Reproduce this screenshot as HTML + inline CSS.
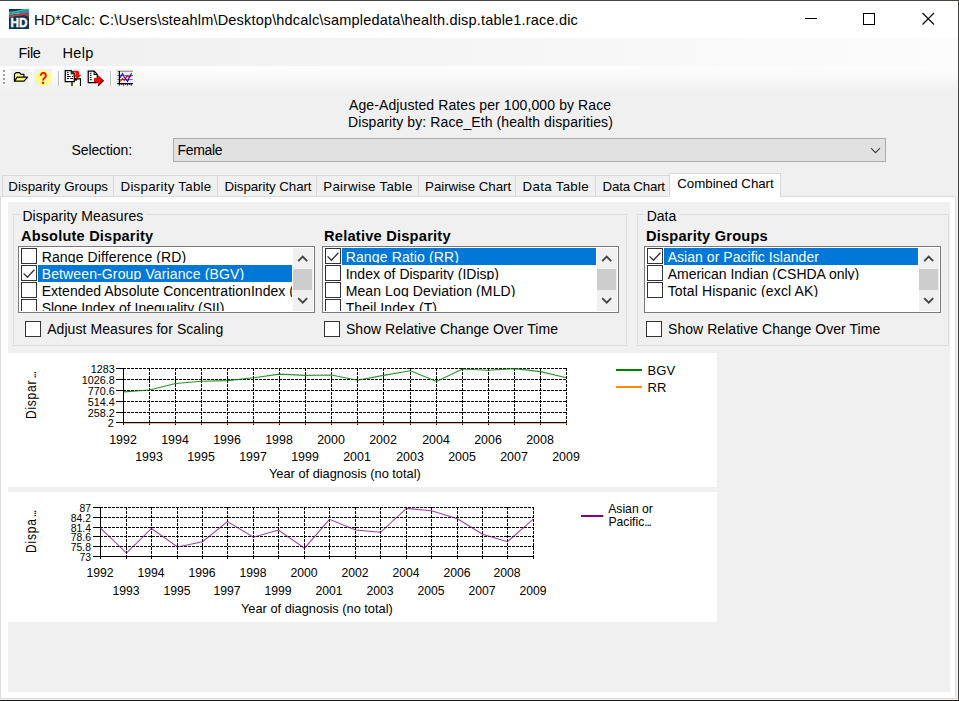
<!DOCTYPE html>
<html lang="en"><head><meta charset="utf-8"><title>HD*Calc</title>
<style>
html,body{margin:0;padding:0}
body{width:959px;height:701px;overflow:hidden;position:relative;background:#f0f0f0;font-family:"Liberation Sans",Arial,sans-serif;color:#000}
div,span,svg{position:absolute;box-sizing:border-box}
span{white-space:nowrap}
.b{font-weight:bold}
.cb{width:16px;height:16px;border:1px solid #333;background:#fff}
.lb{border:1px solid #7a7a7a;background:#fff;overflow:hidden}
.row{left:0;height:17px}
.sel{background:#0078d7}
.it{overflow:hidden;height:14.6px}
.it span{position:absolute;left:0;color:inherit}
.sb{background:#f0f0f0}
.th{background:#cdcdcd}
.gb{border:1px solid #dcdcdc}
.tab{top:175px;height:21px;border:1px solid #d9d9d9;border-bottom:none;background:#f0f0f0}
</style></head><body>
<div style="left:0;top:0;width:959px;height:38px;background:#fff"></div>
<div style="left:0;top:38px;width:958px;height:28px;background:linear-gradient(90deg,#f0f0f0,#f3f3f3 30%,#fcfcfc)"></div>
<div style="left:0;top:66px;width:958px;height:24px;background:linear-gradient(#fdfdfd,#f9f9f9 45%,#f1f1f1);border-radius:0 0 0 3px"></div>
<svg style="left:9px;top:9px" width="20" height="20" viewBox="0 0 20 20">
<rect width="20" height="20" fill="#0d3350"/>
<path d="M0 2.8 C6 2.2 11 0.8 15 0 L20 0 L20 0.9 C14 1.8 7 3.6 0 5Z" fill="#1fc79c"/>
<path d="M0 4.8 C7 3.4 14 1.6 20 0.8 L20 4.8 C17 4.2 15.5 3.9 14 4.2 C9 4.6 4 5.6 0 6.6Z" fill="#3f88bb"/>
<path d="M3 5 C7 4.2 9 3.9 11.5 3.8 L10.5 4.6 C7 4.8 5 5.2 3 5.7Z" fill="#6ab8ee"/>
<path d="M0 6.6 C4 5.6 9 4.6 14 4.2 L15 3.8 L20 5.4 L20 8 L15 6 L13.5 6.4 C9 6.6 4 7.4 0 8.8Z" fill="#c4452c"/>
<text x="10" y="18.4" text-anchor="middle" font-family="Liberation Sans, sans-serif" font-weight="bold" font-size="12.7" fill="#f4f6f8" stroke="#f4f6f8" stroke-width="0.45" textLength="17" lengthAdjust="spacingAndGlyphs">HD</text>
</svg>
<span style="left:34px;top:11.8px;font-size:14.5px;line-height:16px;letter-spacing:0.184px">HD*Calc: C:\Users\steahlm\Desktop\hdcalc\sampledata\health.disp.table1.race.dic</span>
<svg style="left:800px;top:6px" width="150" height="26" viewBox="800 6 150 26" fill="none" stroke="#000" stroke-width="1">
<path d="M805 18.5H817"/><rect x="863.5" y="13.5" width="11" height="11"/><path d="M922.5 13 L934 24.5 M934 13 L922.5 24.5" stroke-width="1.1"/>
</svg>
<span style="left:18.5px;top:44.5px;font-size:14.5px;line-height:16px;letter-spacing:-0.34px">File</span>
<span style="left:62.5px;top:44.5px;font-size:14.5px;line-height:16px;letter-spacing:0.3px">Help</span>
<div style="left:4px;top:71px;width:2px;height:2px;background:#fff"></div><div style="left:3px;top:70px;width:2px;height:2px;background:#a0a0a0"></div><div style="left:4px;top:75px;width:2px;height:2px;background:#fff"></div><div style="left:3px;top:74px;width:2px;height:2px;background:#a0a0a0"></div><div style="left:4px;top:79px;width:2px;height:2px;background:#fff"></div><div style="left:3px;top:78px;width:2px;height:2px;background:#a0a0a0"></div><div style="left:4px;top:83px;width:2px;height:2px;background:#fff"></div><div style="left:3px;top:82px;width:2px;height:2px;background:#a0a0a0"></div>
<div style="left:11px;top:69px;width:18px;height:18px;background:#f0f0f0"></div><div style="left:34px;top:69px;width:18px;height:18px;background:#f0f0f0"></div><div style="left:63px;top:69px;width:18px;height:18px;background:#f0f0f0"></div><div style="left:86px;top:69px;width:18px;height:18px;background:#f0f0f0"></div><div style="left:115px;top:69px;width:18px;height:18px;background:#f0f0f0"></div>
<div style="left:58px;top:71px;width:1px;height:15px;background:#bdbdbd"></div><div style="left:59px;top:71px;width:1px;height:15px;background:#fff"></div><div style="left:110px;top:71px;width:1px;height:15px;background:#bdbdbd"></div><div style="left:111px;top:71px;width:1px;height:15px;background:#fff"></div>
<svg width="0" height="0" style="left:0;top:0"><defs><pattern id="dy" width="2" height="2" patternUnits="userSpaceOnUse"><rect width="2" height="2" fill="#fff"/><rect width="1" height="1" fill="#ff0"/><rect x="1" y="1" width="1" height="1" fill="#ff0"/></pattern></defs></svg>
<svg style="left:11px;top:69px" width="18" height="18" viewBox="0 0 16 16"><path d="M3.1 10.8 V4.6 L4.5 3.2 H7.6 L8.9 4.7 H11.5 V7.3" fill="url(#dy)" stroke="#000" stroke-width="1.1" stroke-linejoin="round"/><path d="M3.1 10.8 L5.6 7.3 H14.7 L11.6 10.8 Z" fill="url(#dy)" stroke="#000" stroke-width="1.1" stroke-linejoin="round"/></svg>
<svg style="left:34px;top:69px" width="18" height="18" viewBox="0 0 16 16"><circle cx="8.5" cy="7.7" r="6.9" fill="url(#dy)"/><text transform="translate(8.4 13.7) scale(0.8 1)" text-anchor="middle" font-family="Liberation Sans, sans-serif" font-weight="bold" font-size="15" fill="#f00">?</text></svg>
<svg style="left:63px;top:69px" width="18" height="18" viewBox="0 0 16 16"><path d="M8 15 V8.8 H15.6 V15" fill="#ff0" stroke="#000" stroke-width="1.1"/><rect x="9.1" y="9.7" width="5.5" height="5.3" fill="#fff"/><rect x="10.4" y="8.3" width="2.2" height="2" fill="#000"/>
<path d="M2 1.4 H7.3 L10 4.3 V11.2 H2 Z" fill="#fff" stroke="#000" stroke-width="1.1"/><path d="M7.3 1.4 V4.3 H10" fill="none" stroke="#000" stroke-width="0.9"/>
<path d="M3.7 3.2H4.8M3.6 4.8H5.4M3.6 6.6H6.8M8 6.6H8.9M3.6 8.5H5.4M6.4 8.5H8.9" stroke="#000" stroke-width="0.9"/>
<path d="M8.9 1.5 H13 Q14.3 1.5 14.3 3 V5.3 H16.2 L12.7 8.6 L9.3 5.3 H11.2 V3.2 H8.9 Z" fill="#f00"/></svg>
<svg style="left:86px;top:69px" width="18" height="18" viewBox="0 0 16 16"><path d="M2 1.9 H7.2 L10 4.8 V12.2 H2 Z" fill="#fff" stroke="#000" stroke-width="1.1"/><path d="M7.2 1.9 V4.8 H10" fill="none" stroke="#000" stroke-width="0.9"/>
<path d="M3.5 3.8H4.9M3.5 5.7H4.9M3.5 7.5H4.9M3.5 9.4H4.9" stroke="#000" stroke-width="1"/>
<path d="M7.2 8 H10.8 V5.8 L15.5 10.2 L10.8 14.8 V11.6 H7.2 Z" fill="#f00"/><path d="M15.6 10.2 L10.9 15" stroke="#000" stroke-width="0.9" fill="none"/><path d="M10.9 6 L15.6 10.2" stroke="#000" stroke-width="0.5" fill="none"/></svg>
<svg style="left:115px;top:69px" width="18" height="18" viewBox="0 0 16 16"><path d="M2 2.1H16M2 5.7H16M2 9.3H16" stroke="#808080" stroke-width="0.9"/><path d="M3.9 1.7V13.2M2 12.9H16" stroke="#000" stroke-width="1.1" fill="none"/>
<path d="M3.9 13.4V14.8M7.5 13.4V14.8M11 13.4V14.8M14.5 13.4V14.8M5.7 13.4V14.2M9.2 13.4V14.2M12.8 13.4V14.2" stroke="#000" stroke-width="0.8"/>
<polyline points="4.7,11 6.6,8.5 8.2,10.1 10.8,5.9 12.6,7.3 14.9,5.7" fill="none" stroke="#f00" stroke-width="0.95"/>
<polyline points="4.5,7.8 6.6,4 8.4,7.3 11.2,11 12.8,7.3 14.7,3.8" fill="none" stroke="#00f" stroke-width="0.95"/></svg>
<span style="left:349px;top:97px;font-size:14px;line-height:16px;letter-spacing:0.1px">Age-Adjusted Rates per 100,000 by Race</span>
<span style="left:348px;top:114px;font-size:14px;line-height:16px;letter-spacing:0.1px">Disparity by: Race_Eth (health disparities)</span>
<span style="left:71.5px;top:141.6px;font-size:14px;line-height:16px;letter-spacing:-0.1px">Selection:</span>
<div style="left:173px;top:138px;width:713px;height:24px;background:#e1e1e1;border:1px solid #adadad"></div>
<span style="left:177.4px;top:141.6px;font-size:14px;line-height:16px;letter-spacing:-0.29px">Female</span>
<svg style="left:868px;top:145px" width="16" height="11" viewBox="868 145 16 11" fill="none" stroke="#404040" stroke-width="1.2"><path d="M871 148.1 L875.5 152.6 L880 148.1"/></svg>
<div style="left:0;top:196px;width:956px;height:503px;background:#fff;border:1px solid #dcdcdc"></div>
<div style="left:8px;top:202px;width:942px;height:490px;background:#f0f0f0"></div>
<div class="tab" style="left:2px;width:112px"></div>
<span style="left:8.3px;top:179px;font-size:13.33px;line-height:15px;letter-spacing:0.03px">Disparity Groups</span>
<div class="tab" style="left:113px;width:105px"></div>
<span style="left:120.5px;top:179px;font-size:13.33px;line-height:15px;letter-spacing:0.25px">Disparity Table</span>
<div class="tab" style="left:217px;width:100px"></div>
<span style="left:224.4px;top:179px;font-size:13.33px;line-height:15px;letter-spacing:-0.07px">Disparity Chart</span>
<div class="tab" style="left:316px;width:103px"></div>
<span style="left:323.3px;top:179px;font-size:13.33px;line-height:15px;letter-spacing:0.26px">Pairwise Table</span>
<div class="tab" style="left:418px;width:98px"></div>
<span style="left:425.1px;top:179px;font-size:13.33px;line-height:15px;letter-spacing:-0.05px">Pairwise Chart</span>
<div class="tab" style="left:515px;width:81px"></div>
<span style="left:522.5px;top:179px;font-size:13.33px;line-height:15px;letter-spacing:0.31px">Data Table</span>
<div class="tab" style="left:595px;width:76px"></div>
<span style="left:602.6px;top:179px;font-size:13.33px;line-height:15px;letter-spacing:-0.22px">Data Chart</span>
<div style="left:669px;top:173px;width:112px;height:24px;border:1px solid #d9d9d9;border-bottom:none;background:#fff"></div><div style="left:670px;top:196px;width:110px;height:2px;background:#fff"></div>
<span style="left:677.3px;top:176.4px;font-size:13.33px;line-height:15px;letter-spacing:-0.05px">Combined Chart</span>
<div class="gb" style="left:13px;top:214px;width:614px;height:132px"></div>
<div style="left:20px;top:208px;width:126px;height:14px;background:#f0f0f0"></div>
<span style="left:22.4px;top:208px;font-size:14px;line-height:16px;letter-spacing:0.06px">Disparity Measures</span>
<div class="gb" style="left:637px;top:214px;width:312px;height:132px"></div>
<div style="left:644px;top:208px;width:35px;height:14px;background:#f0f0f0"></div>
<span style="left:646.7px;top:208px;font-size:14px;line-height:16px;">Data</span>
<span class="b" style="left:21.1px;top:228.4px;font-size:14px;line-height:16px;letter-spacing:0.2px;transform:scaleX(1.039);transform-origin:0 0">Absolute Disparity</span>
<span class="b" style="left:323.5px;top:228.4px;font-size:14px;line-height:16px;letter-spacing:0.2px;transform:scaleX(1.047);transform-origin:0 0">Relative Disparity</span>
<span class="b" style="left:645.5px;top:228.4px;font-size:14px;line-height:16px;letter-spacing:0.2px;transform:scaleX(1.044);transform-origin:0 0">Disparity Groups</span>
<div class="lb" style="left:18px;top:246px;width:297px;height:67px">
<div class="cb" style="left:2px;top:1px"></div><div class="row" style="left:19px;top:1px;width:254px;color:#000"><div class="it" style="left:0;top:0;width:100%"><span style="left:3.7px;top:0.5px;font-size:14px;line-height:16px;letter-spacing:0.12px">Range Difference (RD)</span></div></div>
<div class="cb" style="left:2px;top:18px"><svg style="left:-1px;top:-1px" width="16" height="16" viewBox="0 0 16 16" fill="none" stroke="#333" stroke-width="1.3"><path d="M2.6 8.4 L6.4 12.2 L13.4 4.8"/></svg></div><div class="row sel" style="left:19px;top:18px;width:254px;color:#fff"><div class="it" style="left:0;top:0;width:100%"><span style="left:3.7px;top:0.5px;font-size:14px;line-height:16px;letter-spacing:0.127px">Between-Group Variance (BGV)</span></div></div>
<div class="cb" style="left:2px;top:35px"></div><div class="row" style="left:19px;top:35px;width:254px;color:#000"><div class="it" style="left:0;top:0;width:100%"><span style="left:3.7px;top:0.5px;font-size:14px;line-height:16px;letter-spacing:0.045px">Extended Absolute ConcentrationIndex (ACI)</span></div></div>
<div class="cb" style="left:2px;top:52px"></div><div class="row" style="left:19px;top:52px;width:254px;color:#000"><div class="it" style="left:0;top:0;width:100%"><span style="left:3.7px;top:0.5px;font-size:14px;line-height:16px;letter-spacing:-0.034px">Slope Index of Inequality (SII)</span></div></div>
<div style="left:0;top:64px;width:274px;height:1px;background:#fff"></div><div class="sb" style="left:274px;top:1px;width:20px;height:63px"></div><div class="th" style="left:274px;top:22px;width:19px;height:21px"></div><svg style="left:274px;top:1px" width="20" height="63" viewBox="0 0 20 63" fill="none" stroke="#444" stroke-width="1.9"><path d="M5.2 13.2 L9.7 8.7 L14.2 13.2"/><path d="M5.2 50.2 L9.7 54.7 L14.2 50.2"/></svg></div>
<div class="lb" style="left:322px;top:246px;width:297px;height:67px">
<div class="cb" style="left:2px;top:1px"><svg style="left:-1px;top:-1px" width="16" height="16" viewBox="0 0 16 16" fill="none" stroke="#333" stroke-width="1.3"><path d="M2.6 8.4 L6.4 12.2 L13.4 4.8"/></svg></div><div class="row sel" style="left:19px;top:1px;width:254px;color:#fff"><div class="it" style="left:0;top:0;width:100%"><span style="left:3.7px;top:0.5px;font-size:14px;line-height:16px;letter-spacing:0.138px">Range Ratio (RR)</span></div></div>
<div class="cb" style="left:2px;top:18px"></div><div class="row" style="left:19px;top:18px;width:254px;color:#000"><div class="it" style="left:0;top:0;width:100%"><span style="left:3.7px;top:0.5px;font-size:14px;line-height:16px;letter-spacing:0px">Index of Disparity (IDisp)</span></div></div>
<div class="cb" style="left:2px;top:35px"></div><div class="row" style="left:19px;top:35px;width:254px;color:#000"><div class="it" style="left:0;top:0;width:100%"><span style="left:3.7px;top:0.5px;font-size:14px;line-height:16px;letter-spacing:0.105px">Mean Log Deviation (MLD)</span></div></div>
<div class="cb" style="left:2px;top:52px"></div><div class="row" style="left:19px;top:52px;width:254px;color:#000"><div class="it" style="left:0;top:0;width:100%"><span style="left:3.7px;top:0.5px;font-size:14px;line-height:16px;letter-spacing:0.074px">Theil Index (T)</span></div></div>
<div style="left:0;top:64px;width:274px;height:1px;background:#fff"></div><div class="sb" style="left:274px;top:1px;width:20px;height:63px"></div><div class="th" style="left:274px;top:22px;width:19px;height:21px"></div><svg style="left:274px;top:1px" width="20" height="63" viewBox="0 0 20 63" fill="none" stroke="#444" stroke-width="1.9"><path d="M5.2 13.2 L9.7 8.7 L14.2 13.2"/><path d="M5.2 50.2 L9.7 54.7 L14.2 50.2"/></svg></div>
<div class="lb" style="left:644px;top:246px;width:297px;height:67px">
<div class="cb" style="left:2px;top:1px"><svg style="left:-1px;top:-1px" width="16" height="16" viewBox="0 0 16 16" fill="none" stroke="#333" stroke-width="1.3"><path d="M2.6 8.4 L6.4 12.2 L13.4 4.8"/></svg></div><div class="row sel" style="left:19px;top:1px;width:254px;color:#fff"><div class="it" style="left:0;top:0;width:100%"><span style="left:3.7px;top:0.5px;font-size:14px;line-height:16px;letter-spacing:0.043px">Asian or Pacific Islander</span></div></div>
<div class="cb" style="left:2px;top:18px"></div><div class="row" style="left:19px;top:18px;width:254px;color:#000"><div class="it" style="left:0;top:0;width:100%"><span style="left:3.7px;top:0.5px;font-size:14px;line-height:16px;letter-spacing:-0.025px">American Indian (CSHDA only)</span></div></div>
<div class="cb" style="left:2px;top:35px"></div><div class="row" style="left:19px;top:35px;width:254px;color:#000"><div class="it" style="left:0;top:0;width:100%"><span style="left:3.7px;top:0.5px;font-size:14px;line-height:16px;letter-spacing:0.15px">Total Hispanic (excl AK)</span></div></div>
<div style="left:0;top:64px;width:274px;height:1px;background:#fff"></div><div class="sb" style="left:274px;top:1px;width:20px;height:63px"></div><div class="th" style="left:274px;top:22px;width:19px;height:21px"></div><svg style="left:274px;top:1px" width="20" height="63" viewBox="0 0 20 63" fill="none" stroke="#444" stroke-width="1.9"><path d="M5.2 13.2 L9.7 8.7 L14.2 13.2"/><path d="M5.2 50.2 L9.7 54.7 L14.2 50.2"/></svg></div>
<div class="cb" style="left:25px;top:321px"></div>
<span style="left:47.2px;top:320.7px;font-size:14px;line-height:16px;letter-spacing:0.066px">Adjust Measures for Scaling</span>
<div class="cb" style="left:324px;top:321px"></div>
<span style="left:346px;top:320.7px;font-size:14px;line-height:16px;letter-spacing:0.036px">Show Relative Change Over Time</span>
<div class="cb" style="left:646px;top:321px"></div>
<span style="left:668px;top:320.7px;font-size:14px;line-height:16px;letter-spacing:0.047px">Show Relative Change Over Time</span>
<svg style="left:8px;top:353px" width="709" height="134" viewBox="8 353 709 134" font-family="Liberation Sans, Arial, sans-serif" fill="#000">
<rect x="8" y="353" width="709" height="134" fill="#fff"/>
<text transform="translate(36.3 419) rotate(-90) scale(0.9 1.1)" font-size="13.3" letter-spacing="0.86">Dispar<tspan dx="1.3" letter-spacing="-1.25">...</tspan></text>
<path d="M123 368.5H567M123 379.5H567M123 390.5H567M123 401.5H567M123 412.5H567M149.5 368V423M175.5 368V423M201.5 368V423M227.5 368V423M253.5 368V423M279.5 368V423M305.5 368V423M331.5 368V423M357.5 368V423M383.5 368V423M410.5 368V423M436.5 368V423M462.5 368V423M488.5 368V423M514.5 368V423M540.5 368V423M566.5 368V423" stroke="#000" stroke-width="1" stroke-dasharray="3 1" fill="none" shape-rendering="crispEdges"/>
<path d="M116 368.5H123M116 379.5H123M116 390.5H123M116 401.5H123M116 412.5H123M116 422.5H123M123.5 423V425M149.5 423V425M175.5 423V425M201.5 423V425M227.5 423V425M253.5 423V425M279.5 423V425M305.5 423V425M331.5 423V425M357.5 423V425M383.5 423V425M410.5 423V425M436.5 423V425M462.5 423V425M488.5 423V425M514.5 423V425M540.5 423V425M566.5 423V425" stroke="#000" stroke-width="1" fill="none" shape-rendering="crispEdges"/>
<path d="M124 423.4H567" stroke="#ff8c00" stroke-width="0.7"/>
<path d="M123.5 368V423M123 422.5H567" stroke="#000" stroke-width="1" fill="none" shape-rendering="crispEdges"/>
<polyline points="123.5,391.9 149.5,390.0 175.5,383.5 201.5,381.2 227.5,380.6 253.5,377.8 279.5,374.1 305.5,375.4 331.5,375.0 357.5,380.3 383.5,375.4 410.5,370.7 436.5,381.4 462.5,369.0 488.5,370.3 514.5,368.6 540.5,371.6 566.5,377.8" fill="none" stroke="#008000" stroke-width="1.1" stroke-opacity="0.85"/>
<text x="114.8" y="372.7" font-size="10.8" text-anchor="end">1283</text><text x="114.8" y="383.7" font-size="10.8" text-anchor="end">1026.8</text><text x="114.8" y="394.7" font-size="10.8" text-anchor="end">770.6</text><text x="114.8" y="405.7" font-size="10.8" text-anchor="end">514.4</text><text x="114.8" y="416.7" font-size="10.8" text-anchor="end">258.2</text><text x="113.8" y="426.7" font-size="10.8" text-anchor="end">2</text>
<text x="123.0" y="443.9" font-size="12.4" text-anchor="middle">1992</text><text x="149.0" y="461.3" font-size="12.4" text-anchor="middle">1993</text><text x="175.0" y="443.9" font-size="12.4" text-anchor="middle">1994</text><text x="201.0" y="461.3" font-size="12.4" text-anchor="middle">1995</text><text x="227.0" y="443.9" font-size="12.4" text-anchor="middle">1996</text><text x="253.0" y="461.3" font-size="12.4" text-anchor="middle">1997</text><text x="279.0" y="443.9" font-size="12.4" text-anchor="middle">1998</text><text x="305.0" y="461.3" font-size="12.4" text-anchor="middle">1999</text><text x="331.0" y="443.9" font-size="12.4" text-anchor="middle">2000</text><text x="357.0" y="461.3" font-size="12.4" text-anchor="middle">2001</text><text x="383.0" y="443.9" font-size="12.4" text-anchor="middle">2002</text><text x="410.0" y="461.3" font-size="12.4" text-anchor="middle">2003</text><text x="436.0" y="443.9" font-size="12.4" text-anchor="middle">2004</text><text x="462.0" y="461.3" font-size="12.4" text-anchor="middle">2005</text><text x="488.0" y="443.9" font-size="12.4" text-anchor="middle">2006</text><text x="514.0" y="461.3" font-size="12.4" text-anchor="middle">2007</text><text x="540.0" y="443.9" font-size="12.4" text-anchor="middle">2008</text><text x="566.0" y="461.3" font-size="12.4" text-anchor="middle">2009</text>
<text x="269" y="478" font-size="12.8">Year of diagnosis (no total)</text>
<path d="M616 370H642" stroke="#008000" stroke-width="2"/><path d="M616 387H642" stroke="#ff8c00" stroke-width="2"/>
<text x="647.6" y="374.8" font-size="13">BGV</text><text x="647.6" y="392" font-size="13">RR</text>
</svg>
<svg style="left:8px;top:492px" width="709" height="130" viewBox="8 492 709 130" font-family="Liberation Sans, Arial, sans-serif" fill="#000">
<rect x="8" y="492" width="709" height="130" fill="#fff"/>
<text transform="translate(36.3 552.9) rotate(-90) scale(0.9 1.1)" font-size="13.3" letter-spacing="0.86">Dispa<tspan dx="1.3" letter-spacing="-1.25">...</tspan></text>
<path d="M100 507.5H534M100 517.5H534M100 527.5H534M100 536.5H534M100 546.5H534M126.5 507V557M151.5 507V557M177.5 507V557M202.5 507V557M227.5 507V557M253.5 507V557M278.5 507V557M304.5 507V557M329.5 507V557M355.5 507V557M380.5 507V557M406.5 507V557M431.5 507V557M457.5 507V557M482.5 507V557M507.5 507V557M533.5 507V557" stroke="#000" stroke-width="1" stroke-dasharray="3 1" fill="none" shape-rendering="crispEdges"/>
<path d="M93 507.5H100M93 517.5H100M93 527.5H100M93 536.5H100M93 546.5H100M93 556.5H100M100.5 557V559M126.5 557V559M151.5 557V559M177.5 557V559M202.5 557V559M227.5 557V559M253.5 557V559M278.5 557V559M304.5 557V559M329.5 557V559M355.5 557V559M380.5 557V559M406.5 557V559M431.5 557V559M457.5 557V559M482.5 557V559M507.5 557V559M533.5 557V559" stroke="#000" stroke-width="1" fill="none" shape-rendering="crispEdges"/>
<path d="M100.5 507V557M100 556.5H534" stroke="#000" stroke-width="1" fill="none" shape-rendering="crispEdges"/>
<polyline points="100.5,528.2 126.5,553.1 151.5,528.5 177.5,546.9 202.5,541.7 227.5,521.6 253.5,537.2 278.5,530.0 304.5,548.2 329.5,519.3 355.5,530.0 380.5,532.3 406.5,508.4 431.5,510.7 457.5,518.8 482.5,534.2 507.5,541.7 533.5,518.8" fill="none" stroke="#800080" stroke-width="1.05" stroke-opacity="0.75"/>
<text x="91" y="511.5" font-size="10.4" text-anchor="end">87</text><text x="91" y="521.5" font-size="10.4" text-anchor="end">84.2</text><text x="91" y="531.5" font-size="10.4" text-anchor="end">81.4</text><text x="91" y="540.5" font-size="10.4" text-anchor="end">78.6</text><text x="91" y="550.5" font-size="10.4" text-anchor="end">75.8</text><text x="91" y="560.5" font-size="10.4" text-anchor="end">73</text>
<text x="100.0" y="576.5" font-size="12.2" text-anchor="middle">1992</text><text x="126.0" y="594.6" font-size="12.2" text-anchor="middle">1993</text><text x="151.0" y="576.5" font-size="12.2" text-anchor="middle">1994</text><text x="177.0" y="594.6" font-size="12.2" text-anchor="middle">1995</text><text x="202.0" y="576.5" font-size="12.2" text-anchor="middle">1996</text><text x="227.0" y="594.6" font-size="12.2" text-anchor="middle">1997</text><text x="253.0" y="576.5" font-size="12.2" text-anchor="middle">1998</text><text x="278.0" y="594.6" font-size="12.2" text-anchor="middle">1999</text><text x="304.0" y="576.5" font-size="12.2" text-anchor="middle">2000</text><text x="329.0" y="594.6" font-size="12.2" text-anchor="middle">2001</text><text x="355.0" y="576.5" font-size="12.2" text-anchor="middle">2002</text><text x="380.0" y="594.6" font-size="12.2" text-anchor="middle">2003</text><text x="406.0" y="576.5" font-size="12.2" text-anchor="middle">2004</text><text x="431.0" y="594.6" font-size="12.2" text-anchor="middle">2005</text><text x="457.0" y="576.5" font-size="12.2" text-anchor="middle">2006</text><text x="482.0" y="594.6" font-size="12.2" text-anchor="middle">2007</text><text x="507.0" y="576.5" font-size="12.2" text-anchor="middle">2008</text><text x="533.0" y="594.6" font-size="12.2" text-anchor="middle">2009</text>
<text x="241" y="612.5" font-size="12.8">Year of diagnosis (no total)</text>
<path d="M581 516H603.3" stroke="#800080" stroke-width="2"/>
<text x="608.2" y="512.7" font-size="12.2">Asian or</text><text x="608.4" y="525.6" font-size="12.2">Pacific<tspan letter-spacing="-1.3">...</tspan></text>
</svg>
<div style="left:0;top:0;width:959px;height:1px;background:#46423e"></div><div style="left:958px;top:0;width:1px;height:701px;background:#46423e"></div><div style="left:0;top:700px;width:959px;height:1px;background:#1e1c1a"></div>
</body></html>
